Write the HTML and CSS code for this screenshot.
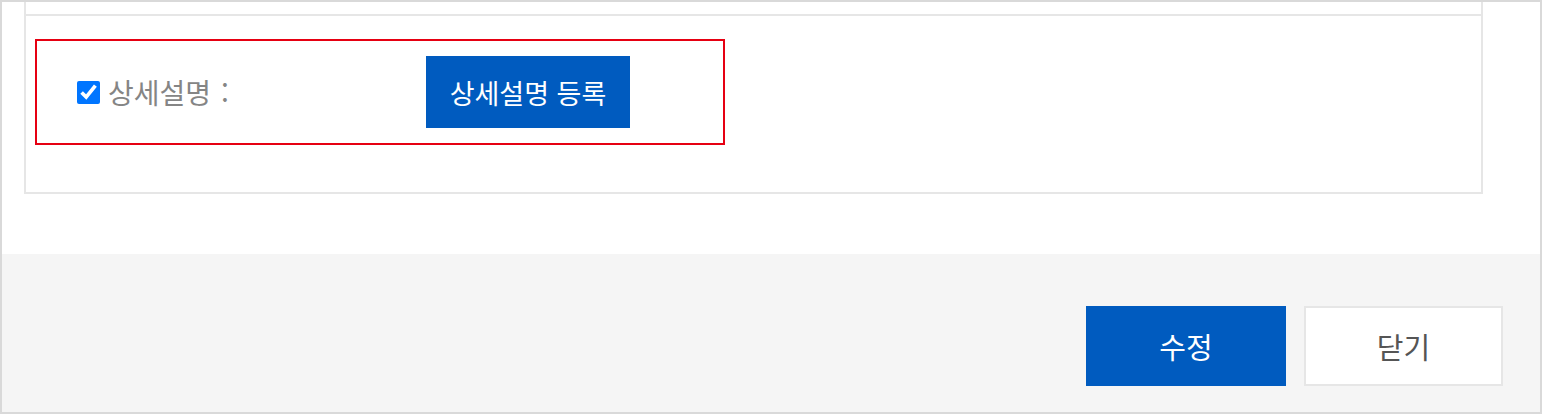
FILE: index.html
```
<!DOCTYPE html>
<html lang="ko">
<head>
    <meta charset="UTF-8">
    <meta name="viewport" content="width=device-width, initial-scale=1.0">
    <title>상세설명 수정</title>
    <link rel="stylesheet" href="styles.css">
</head>
<body>

    <div class="popup">
        <div class="popup-body">
            <div class="detail-box">
                <div class="detail-prev-row"></div>

                <!-- 상세설명 영역 -->
                <div class="detail-row">
                    <label class="detail-label">
                        <input type="checkbox" checked>
                        <span>상세설명<span class="colon">:</span></span>
                    </label>
                    <button class="btn-primary btn-register">상세설명 등록</button>
                </div>
            </div>
        </div>

        <div class="popup-footer">
            <button class="btn-primary btn-footer">수정</button>
            <button class="btn-close btn-footer">닫기</button>
        </div>
    </div>

</body>
</html>
```

FILE: styles.css
```
html, body {
    margin: 0;
    padding: 0;
    background: #fff;
}

body {
    font-family: "Noto Sans CJK KR", "Noto Sans", sans-serif;
}

.popup {
    box-sizing: border-box;
    width: 1542px;
    height: 414px;
    border: 2px solid #d9d9d9;
    display: flex;
    flex-direction: column;
}

.popup-body {
    background: #fff;
    padding-bottom: 60px;
}

.detail-box {
    margin-left: 22px;
    margin-right: 57px;
    border: 2px solid #e6e6e6;
    border-top: none;
    padding-bottom: 47px;
}

.detail-prev-row {
    height: 12px;
    border-bottom: 2px solid #e6e6e6;
}

/* red highlighted row */
.detail-row {
    margin-top: 23px;
    margin-left: 9px;
    width: 690px;
    box-sizing: border-box;
    border: 2px solid #e60012;
    padding: 15px 0 15px 40px;
    display: flex;
    align-items: center;
}

.detail-label {
    display: flex;
    align-items: center;
    gap: 8px;
    width: 349px;
    flex-shrink: 0;
    font-size: 28px;
    color: #858585;
}

.detail-label input {
    width: 23px;
    height: 23px;
    margin: 0;
}

.colon {
    margin-left: 10px;
}

.btn-primary {
    background: #005bbf;
    color: #fff;
    border: none;
    font-family: "Noto Sans CJK KR", "Noto Sans", sans-serif;
    cursor: pointer;
}

.btn-register {
    width: 204px;
    height: 72px;
    padding: 0;
    font-size: 27px;
}

.popup-footer {
    flex: 1;
    background: #f5f5f5;
    display: flex;
    justify-content: flex-end;
    align-items: flex-start;
    gap: 18px;
    padding: 52px 37px 0 0;
}

.btn-footer {
    width: 200px;
    height: 80px;
    padding: 0;
    font-size: 29px;
}

.btn-close {
    width: 199px;
    background: #fff;
    color: #555;
    border: 2px solid #e6e6e6;
    font-family: "Noto Sans CJK KR", "Noto Sans", sans-serif;
    cursor: pointer;
}
```
